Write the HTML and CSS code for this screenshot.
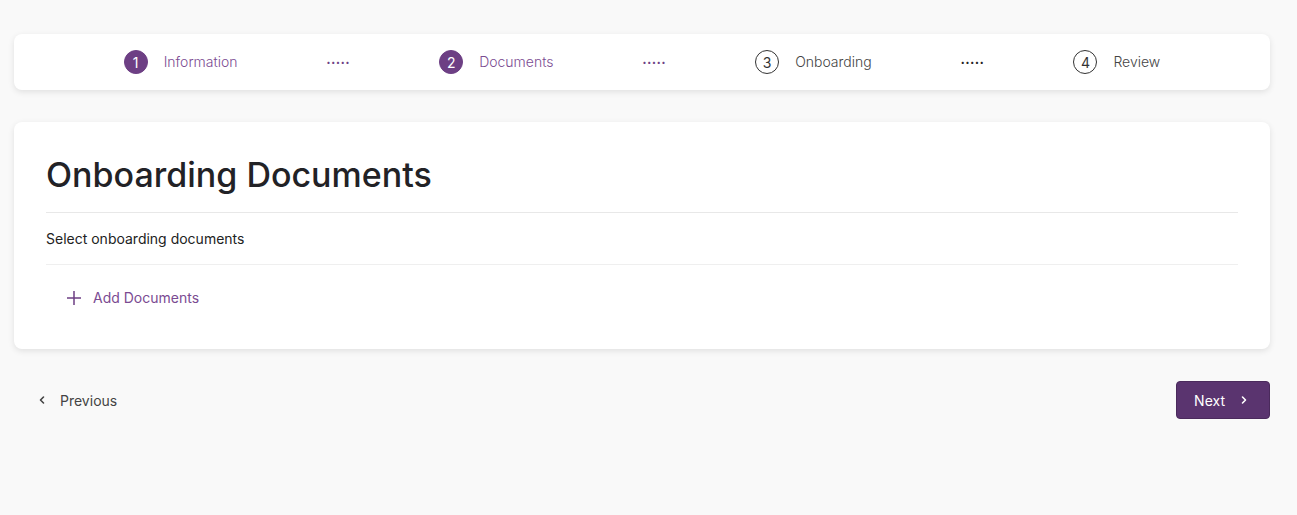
FILE: index.html
```html
<!DOCTYPE html>
<html lang="en">
<head>
<meta charset="utf-8">
<title>Onboarding Documents</title>
<link rel="stylesheet" href="styles.css">
</head>
<body>
<div class="page">
  <nav class="stepper">
    <div class="step done"><span class="num">1</span><span class="label">Information</span></div>
    <span class="sep done">•••••</span>
    <div class="step done"><span class="num">2</span><span class="label">Documents</span></div>
    <span class="sep done">•••••</span>
    <div class="step"><span class="num">3</span><span class="label">Onboarding</span></div>
    <span class="sep">•••••</span>
    <div class="step"><span class="num">4</span><span class="label">Review</span></div>
  </nav>

  <section class="card">
    <h1 class="title">Onboarding Documents</h1>
    <p class="subtitle">Select onboarding documents</p>
    <div class="actions">
      <button class="add-btn" type="button">
        <svg class="plus" width="16" height="16" viewBox="0 0 16 16" aria-hidden="true"><path d="M8 1v14M1 8h14" stroke="currentColor" stroke-width="1.5" fill="none"/></svg>
        <span>Add Documents</span>
      </button>
    </div>
  </section>

  <div class="footer">
    <button class="prev-btn" type="button">
      <svg width="10" height="10" viewBox="0 0 10 10" aria-hidden="true"><path d="M6.5 2L3.5 5l3 3" stroke="currentColor" stroke-width="1.6" fill="none" stroke-linecap="round" stroke-linejoin="round"/></svg>
      <span>Previous</span>
    </button>
    <button class="next-btn" type="button">
      <span>Next</span>
      <svg width="10" height="10" viewBox="0 0 10 10" aria-hidden="true"><path d="M3.5 2l3 3-3 3" stroke="currentColor" stroke-width="1.6" fill="none" stroke-linecap="round" stroke-linejoin="round"/></svg>
    </button>
  </div>
</div>
</body>
</html>
```

FILE: styles.css
```css
* { box-sizing: border-box; }
html, body { margin: 0; padding: 0; }
body {
  background: #f9f9f9;
  font-family: Inter, "Noto Sans", "Liberation Sans", sans-serif;
  color: #222226;
}
.page {
  padding: 34px 27px 0 14px;
}
.stepper {
  background: #fff;
  border-radius: 8px;
  box-shadow: 0 2px 6px rgba(0,0,0,0.10);
  height: 56px;
  display: flex;
  align-items: center;
  justify-content: center;
  gap: 89px;
}
.step {
  display: flex;
  align-items: center;
  gap: 16px;
  font-size: 14px;
  font-weight: 300;
  color: #444;
}
.label { position: relative; top: -1px; }
.num {
  width: 24px;
  height: 24px;
  border-radius: 50%;
  border: 1px solid #333;
  display: flex;
  align-items: center;
  justify-content: center;
  font-size: 14px;
  font-weight: 400;
  color: #333;
}
.step.done { color: #7b4b92; }
.step.done .num {
  background: #6d3f84;
  border-color: #6d3f84;
  color: #fff;
}
.sep {
  font-size: 7px;
  letter-spacing: 0.8px;
  color: #222;
}
.sep.done { color: #6d3f84; }

.card {
  margin-top: 32px;
  background: #fff;
  border-radius: 8px;
  box-shadow: 0 2px 6px rgba(0,0,0,0.10);
  padding: 28px 32px 37px 32px;
}
.title {
  margin: 0;
  font-size: 34px;
  font-weight: 500;
  letter-spacing: 0;
  line-height: 50px;
  padding-bottom: 12px;
  border-bottom: 1px solid #e8e8e8;
  color: #222226;
}
.subtitle {
  margin: 0;
  font-size: 14px;
  line-height: 20px;
  padding: 16px 0 15px;
  border-bottom: 1px solid #efefef;
  color: #222;
}
.actions {
  padding: 18px 0 0 20px;
}
.add-btn {
  display: inline-flex;
  align-items: center;
  gap: 11px;
  background: none;
  border: 0;
  padding: 6px 0;
  font: inherit;
  font-size: 14px;
  color: #7b4b92;
  cursor: pointer;
}
.plus { color: #6d3f84; }

.footer {
  margin-top: 32px;
  display: flex;
  justify-content: space-between;
  align-items: center;
}
.prev-btn {
  display: inline-flex;
  align-items: center;
  gap: 13px;
  background: none;
  border: 0;
  padding: 0 0 0 23px;
  font: inherit;
  font-size: 14px;
  color: #444;
  cursor: pointer;
}
.next-btn {
  display: inline-flex;
  align-items: center;
  gap: 14px;
  height: 38px;
  padding: 0 20px 0 17px;
  background: #5a346f;
  border: 1px solid #4a2a5c;
  border-radius: 4px;
  font: inherit;
  font-size: 14px;
  color: #fff;
  cursor: pointer;
}
```
